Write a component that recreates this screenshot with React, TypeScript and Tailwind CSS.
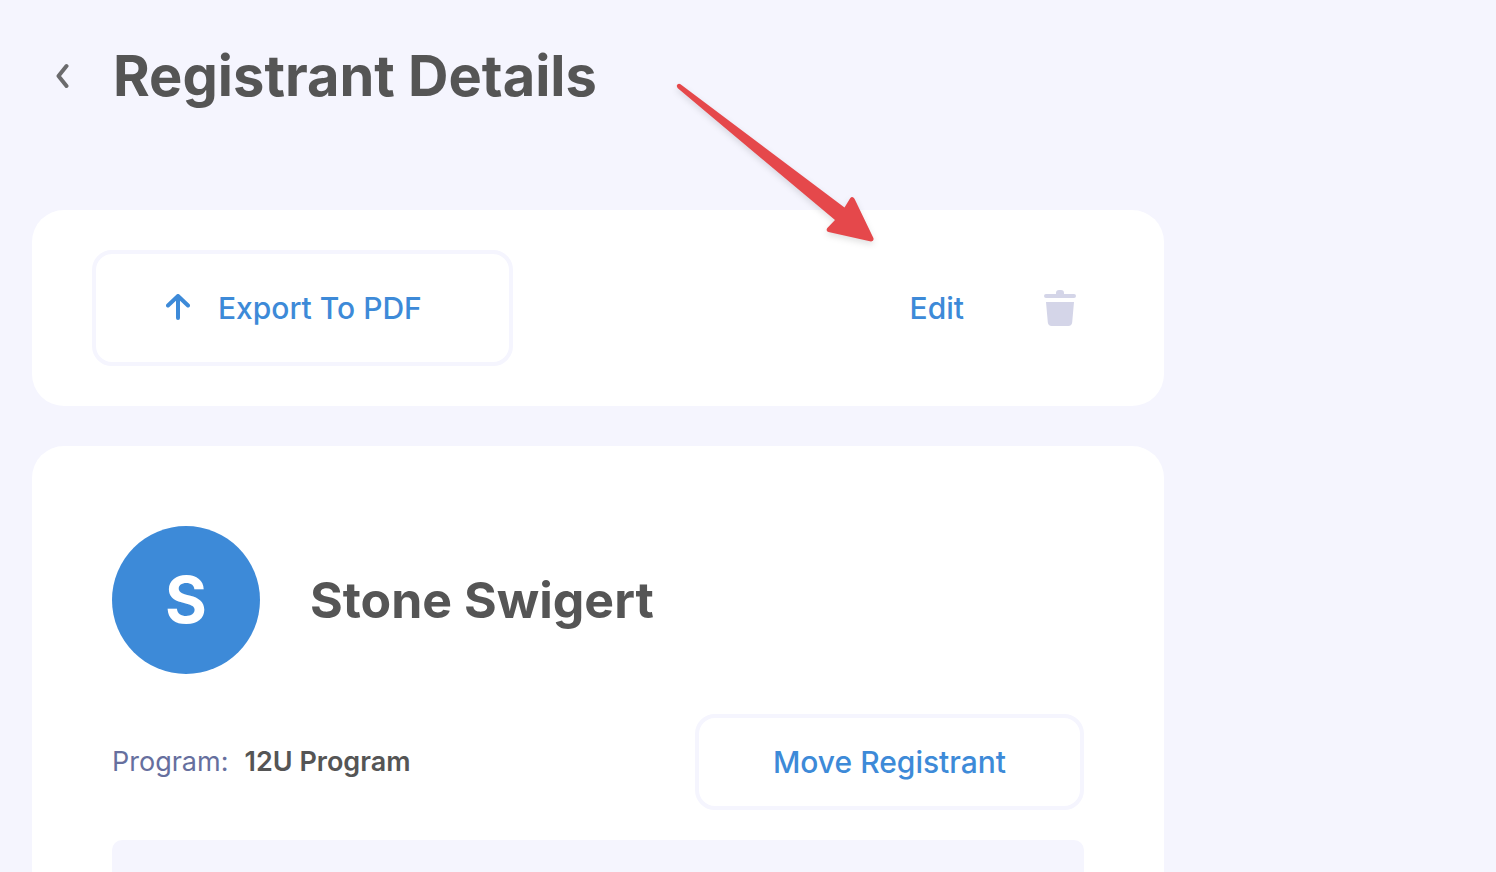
interface Registrant {
  name: string
  program: string
}

const registrant: Registrant = {
  name: 'Stone Swigert',
  program: '12U Program',
}

function BackIcon() {
  return (
    <svg width="14" height="26" viewBox="0 0 14 26" fill="none" aria-hidden="true">
      <path d="M11.500 3 3.500 13l8 10" stroke="#6b6b6d" strokeWidth="4" strokeLinecap="round" strokeLinejoin="round" />
    </svg>
  )
}

function UploadIcon() {
  return (
    <svg width="24" height="28" viewBox="0 0 24 28" fill="none" aria-hidden="true">
      <path
        d="M12 2v22M2 11.500 12 2l10 9.500"
        stroke="currentColor"
        strokeWidth="4"
        strokeLinecap="round"
        strokeLinejoin="round"
      />
    </svg>
  )
}

function TrashIcon() {
  return (
    <svg width="32" height="36" viewBox="0 0 32 36" fill="#d4d5e8" aria-hidden="true">
      <path d="M2 4h10V3a3 3 0 0 1 3-3h2a3 3 0 0 1 3 3v1h10a2 2 0 0 1 0 4H2a2 2 0 0 1 0-4Z" />
      <path d="M2 12h28l-1.800 20.300A4 4 0 0 1 24.200 36H7.800a4 4 0 0 1-4-3.700Z" />
    </svg>
  )
}

function PointerArrow() {
  return (
    <svg
      className="pointer-events-none absolute left-[660px] top-[70px]"
      width="240"
      height="190"
      viewBox="660 70 240 190"
      aria-hidden="true"
    >
      <path
        className="drop-shadow-md"
        d="M680.500 84.300 844.500 207.500 850 198.400Q852.300 195.500 854.500 198.700L873.400 238Q874.300 241.600 871 241.500L828.500 232Q825.500 230.800 827.300 228L835 220 677.800 88.300Q676 86.200 677.400 84.600 678.900 83.200 680.500 84.300Z"
        fill="#e5484b"
      />
    </svg>
  )
}

export default function App() {
  return (
    <div className="relative flex min-h-screen flex-col bg-[#f5f5fe] font-['Inter',sans-serif] text-[#555555]">
      <header className="flex items-center gap-11 pt-10 pb-[98px] pl-[55px]">
        <button type="button" aria-label="Back">
          <BackIcon />
        </button>
        <h1 className="text-[56px] leading-[72px] font-bold">Registrant Details</h1>
      </header>

      <main className="flex w-full max-w-[1164px] flex-1 flex-col gap-10 pl-8">
        <section className="flex items-center justify-between rounded-[32px] bg-white py-10 pr-[88px] pl-[60px]">
          <button
            className="flex h-[116px] min-w-[421px] items-center gap-7 rounded-[20px] border-4 border-[#f5f5fe] px-[70px] text-[30px] font-medium text-[#3d8ad8]"
            type="button"
          >
            <UploadIcon />
            Export To PDF
          </button>
          <div className="flex items-center gap-20">
            <button className="text-[30px] font-medium text-[#3d8ad8]" type="button">
              Edit
            </button>
            <button type="button" aria-label="Delete registrant">
              <TrashIcon />
            </button>
          </div>
        </section>

        <section className="flex flex-1 flex-col rounded-t-[32px] bg-white px-20 pt-20">
          <div className="flex items-center gap-[50px]">
            <div className="flex size-[148px] items-center justify-center rounded-full bg-[#3d8ad8] text-[64px] font-bold text-white">
              {registrant.name[0]}
            </div>
            <h2 className="text-[50px] font-bold">{registrant.name}</h2>
          </div>

          <div className="mt-10 flex items-center justify-between">
            <dl className="flex gap-4 text-[27px]">
              <dt className="text-[#666f9e]">Program:</dt>
              <dd className="font-semibold">{registrant.program}</dd>
            </dl>
            <button
              className="h-24 min-w-[389px] rounded-[20px] border-4 border-[#f5f5fe] px-16 text-[30px] font-medium text-[#3d8ad8]"
              type="button"
            >
              Move Registrant
            </button>
          </div>

          <div className="mt-[30px] flex-1 rounded-t-[10px] bg-[#f5f5fe]" />
        </section>
      </main>

      <PointerArrow />
    </div>
  )
}
